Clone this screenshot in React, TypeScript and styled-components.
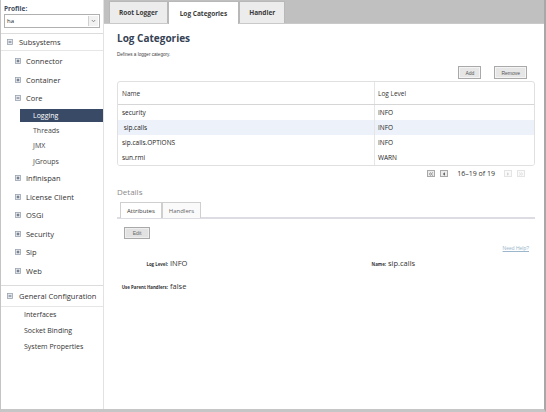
import React from "react";
import { styled, createGlobalStyle } from "styled-components";

const GlobalStyle = createGlobalStyle`
  html, body {
    margin: 0;
    padding: 0;
    background: #fff;
  }
  body {
    font-family: "Open Sans", "Liberation Sans", sans-serif;
    color: #333;
  }
`;

interface TreeNode {
  label: string;
  open?: boolean;
  children?: string[];
}

const subsystems: TreeNode[] = [
  { label: "Connector" },
  { label: "Container" },
  { label: "Core", open: true, children: ["Logging", "Threads", "JMX", "JGroups"] },
  { label: "Infinispan" },
  { label: "License Client" },
  { label: "OSGi" },
  { label: "Security" },
  { label: "Sip" },
  { label: "Web" },
];

const categories = [
  { name: "security", level: "INFO" },
  { name: " sip.calls", level: "INFO" },
  { name: "sip.calls.OPTIONS", level: "INFO" },
  { name: "sun.rmi", level: "WARN" },
];

function ToggleIcon({ open }: { open?: boolean }) {
  return (
    <svg width="6" height="6" viewBox="0 0 6 6">
      <rect x="0.5" y="0.5" width="5" height="5" fill="#e6e9ee" stroke="#9aa3b0" strokeWidth="0.8" />
      <line x1="1.6" y1="3" x2="4.4" y2="3" stroke="#4a5566" strokeWidth="0.9" />
      {!open && <line x1="3" y1="1.6" x2="3" y2="4.4" stroke="#4a5566" strokeWidth="0.9" />}
    </svg>
  );
}

function PagerIcon({ kind, disabled }: { kind: "first" | "prev" | "next" | "last"; disabled?: boolean }) {
  const c = disabled ? "#d0d0d0" : "#555";
  return (
    <PagerBtn $disabled={disabled}>
      <svg width="7" height="7" viewBox="0 0 7 7">
        {kind === "prev" && <path d="M4.5 1.5 L2.2 3.5 L4.5 5.5 Z" fill={c} />}
        {kind === "next" && <path d="M2.5 1.5 L4.8 3.5 L2.5 5.5 Z" fill={c} />}
        {kind === "first" && (
          <path d="M3.4 1.8 L1.6 3.5 L3.4 5.2 M5.6 1.8 L3.8 3.5 L5.6 5.2" stroke={c} fill="none" strokeWidth="0.8" />
        )}
        {kind === "last" && (
          <path d="M1.4 1.8 L3.2 3.5 L1.4 5.2 M3.6 1.8 L5.4 3.5 L3.6 5.2" stroke={c} fill="none" strokeWidth="0.8" />
        )}
      </svg>
    </PagerBtn>
  );
}

export default function App() {
  return (
    <>
      <GlobalStyle />
      <Frame>
        <Sidebar>
          <ProfileBox>
            <ProfileLabel>Profile:</ProfileLabel>
            <Select>
              <span>ha</span>
              <SelectArrow>
                <svg width="5" height="4" viewBox="0 0 5 4">
                  <path d="M0.8 1 L2.5 2.8 L4.2 1" stroke="#777" strokeWidth="0.8" fill="none" />
                </svg>
              </SelectArrow>
            </Select>
          </ProfileBox>

          <SectionHeader>
            <ToggleIcon open />
            <span>Subsystems</span>
          </SectionHeader>
          <TreeList>
            {subsystems.map((node) => (
              <React.Fragment key={node.label}>
                <TreeItem>
                  <ToggleIcon open={node.open} />
                  <span>{node.label}</span>
                </TreeItem>
                {node.children?.map((child) => (
                  <SubItem key={child} className={child === "Logging" ? "selected" : ""}>
                    {child}
                  </SubItem>
                ))}
              </React.Fragment>
            ))}
          </TreeList>

          <SectionHeader className="bordered">
            <ToggleIcon open />
            <span>General Configuration</span>
          </SectionHeader>
          <PlainList>
            <PlainItem>Interfaces</PlainItem>
            <PlainItem>Socket Binding</PlainItem>
            <PlainItem>System Properties</PlainItem>
          </PlainList>
        </Sidebar>

        <Main>
          <TabBar>
            <Tab>Root Logger</Tab>
            <Tab className="active">Log Categories</Tab>
            <Tab>Handler</Tab>
          </TabBar>

          <Content>
            <Title>Log Categories</Title>
            <Description>Defines a logger category.</Description>

            <Toolbar>
              <ToolButton>Add</ToolButton>
              <ToolButton>Remove</ToolButton>
            </Toolbar>

            <Table>
              <HeadRow>
                <NameCell>Name</NameCell>
                <LevelCell>Log Level</LevelCell>
              </HeadRow>
              {categories.map((row, i) => (
                <DataRow key={row.name} $selected={i === 1}>
                  <NameCell>{row.name}</NameCell>
                  <LevelCell>{row.level}</LevelCell>
                </DataRow>
              ))}
            </Table>

            <Pager>
              <PagerIcon kind="first" />
              <PagerIcon kind="prev" />
              <PagerText>16–19 of 19</PagerText>
              <PagerIcon kind="next" disabled />
              <PagerIcon kind="last" disabled />
            </Pager>

            <DetailsTitle>Details</DetailsTitle>
            <SubTabs>
              <SubTab className="active">Attributes</SubTab>
              <SubTab>Handlers</SubTab>
            </SubTabs>

            <EditButton>Edit</EditButton>
            <HelpRow>
              <HelpLink>Need Help?</HelpLink>
            </HelpRow>

            <Form>
              <FieldLabel>Log Level:</FieldLabel>
              <FieldValue>INFO</FieldValue>
              <FieldLabel>Name:</FieldLabel>
              <FieldValue>sip.calls</FieldValue>
              <FieldLabel className="tall">Use Parent Handlers:</FieldLabel>
              <FieldValue className="tall">false</FieldValue>
            </Form>
          </Content>
        </Main>
      </Frame>
    </>
  );
}

const Frame = styled.div`
  box-sizing: border-box;
  width: 546px;
  height: 412px;
  display: flex;
  border-left: 1px solid #c4c4c4;
  border-right: 2px solid #a8a8a8;
  border-bottom: 3px solid #c6c6c6;
  overflow: hidden;
`;

const Sidebar = styled.div`
  width: 102px;
  flex-shrink: 0;
  border-right: 1px solid #e2e2e2;
  display: flex;
  flex-direction: column;
`;

const ProfileBox = styled.div`
  padding: 5px 3px 5px 3px;
  border-bottom: 1px solid #dcdcdc;
`;

const ProfileLabel = styled.div`
  font-size: 6.5px;
  font-weight: 700;
  color: #3e4b5e;
  line-height: 8px;
  margin-bottom: 1px;
`;

const Select = styled.div`
  display: flex;
  align-items: center;
  justify-content: space-between;
  height: 12px;
  border: 1px solid #b0b0b0;
  font-size: 6px;
  color: #222;
  padding-left: 2px;
  background: #fff;
`;

const SelectArrow = styled.div`
  width: 9px;
  height: 10px;
  margin-right: 1px;
  border-left: 1px solid #d0d0d0;
  background: #f2f2f2;
  display: flex;
  align-items: center;
  justify-content: center;
`;

const SectionHeader = styled.div`
  display: flex;
  align-items: center;
  gap: 6px;
  height: 16px;
  padding: 0 0 0 6px;
  font-size: 7.5px;
  color: #333;
  border-bottom: 1px solid #e6e6e6;
  &.bordered {
    margin-top: 5px;
    border-top: 1px solid #dcdcdc;
    height: 20px;
    padding-top: 0;
  }
`;

const TreeList = styled.div`
  display: flex;
  flex-direction: column;
  padding-top: 1px;
`;

const TreeItem = styled.div`
  display: flex;
  align-items: center;
  gap: 5px;
  height: 18.5px;
  padding-left: 14px;
  font-size: 7.5px;
  color: #333;
`;

const SubItem = styled.div`
  height: 15.5px;
  line-height: 15.5px;
  margin-left: 19px;
  padding-left: 13px;
  font-size: 7px;
  color: #444;
  &.selected {
    background: #394a66;
    color: #fff;
    height: 13px;
    line-height: 13px;
    margin: 1px 0 1px 19px;
  }
`;

const PlainList = styled.div`
  display: flex;
  flex-direction: column;
  padding-top: 0;
`;

const PlainItem = styled.div`
  height: 16px;
  line-height: 16px;
  padding-left: 23px;
  font-size: 7px;
  color: #333;
`;

const Main = styled.div`
  flex: 1;
  display: flex;
  flex-direction: column;
  min-width: 0;
`;

const TabBar = styled.div`
  height: 24px;
  background: #c0c0c0;
  display: flex;
  align-items: flex-end;
  padding-left: 5px;
  box-sizing: border-box;
  border-bottom: 1px solid #c9c9c9;
`;

const Tab = styled.div`
  height: 22px;
  box-sizing: border-box;
  padding: 0 9px;
  display: flex;
  align-items: center;
  font-size: 6.5px;
  font-weight: 700;
  color: #3a3a3a;
  background: #ececec;
  border: 1px solid #b8b8b8;
  border-bottom: none;
  &.active {
    background: #fff;
    height: 23px;
    padding: 0 11px;
    margin-bottom: -1px;
  }
`;

const Content = styled.div`
  padding: 0 9px 0 13px;
  display: flex;
  flex-direction: column;
`;

const Title = styled.div`
  margin-top: 8px;
  font-size: 10px;
  font-weight: 700;
  color: #364254;
  line-height: 13px;
`;

const Description = styled.div`
  margin-top: 7px;
  font-family: "Liberation Sans", Arial, sans-serif;
  font-size: 4.6px;
  color: #444;
`;

const Toolbar = styled.div`
  display: flex;
  justify-content: flex-end;
  gap: 13px;
  margin-top: 9px;
  padding-right: 8px;
`;

const ToolButton = styled.div`
  height: 13px;
  box-sizing: border-box;
  padding: 0 6px;
  display: flex;
  align-items: center;
  font-family: "Liberation Sans", Arial, sans-serif;
  font-size: 5px;
  color: #555;
  background: #e6e6e6;
  border: 1px solid #a9a9a9;
  box-shadow: inset 0 0 0 1px #f4f4f4;
`;

const Table = styled.div`
  margin-top: 2px;
  border: 1px solid #e0e0e0;
  border-radius: 3px;
  overflow: hidden;
`;

const HeadRow = styled.div`
  display: flex;
  height: 22px;
  align-items: center;
  border-bottom: 1px solid #d6d6d6;
  font-size: 6.5px;
  color: #333;
`;

const DataRow = styled.div<{ $selected?: boolean }>`
  display: flex;
  height: 15px;
  align-items: center;
  font-size: 6.5px;
  color: #222;
  background: ${(p) => (p.$selected ? "#edf2fa" : "#fff")};
`;

const NameCell = styled.div`
  width: 256px;
  padding-left: 4px;
  box-sizing: border-box;
  white-space: pre;
  height: 100%;
  display: flex;
  align-items: center;
`;

const LevelCell = styled.div`
  flex: 1;
  padding-left: 3px;
  height: 100%;
  display: flex;
  align-items: center;
  border-left: 1px solid #e6e6e6;
`;

const Pager = styled.div`
  display: flex;
  align-items: center;
  justify-content: flex-end;
  gap: 5px;
  margin-top: 3px;
  padding-right: 10px;
  height: 9px;
`;

const PagerBtn = styled.div<{ $disabled?: boolean }>`
  width: 8px;
  height: 7px;
  box-sizing: border-box;
  border: 1px solid ${(p) => (p.$disabled ? "#e4e4e4" : "#a8a8a8")};
  background: ${(p) => (p.$disabled ? "#fafafa" : "#ececec")};
  display: flex;
  align-items: center;
  justify-content: center;
  svg {
    width: 6px;
    height: 6px;
  }
`;

const PagerText = styled.div`
  font-size: 7px;
  color: #333;
  margin: 0 4px;
`;

const DetailsTitle = styled.div`
  margin-top: 9px;
  font-size: 8px;
  color: #8a8a8a;
  line-height: 10px;
`;

const SubTabs = styled.div`
  display: flex;
  margin-top: 5px;
  border-bottom: 2px solid #dcdce2;
  padding-left: 3px;
`;

const SubTab = styled.div`
  height: 16px;
  box-sizing: border-box;
  padding: 0 6px;
  display: flex;
  align-items: center;
  font-size: 6px;
  color: #666;
  border: 1px solid #cfcfcf;
  border-bottom: none;
  background: #fafafa;
  margin-bottom: -1px;
  &.active {
    color: #333;
    background: #fff;
    padding: 0 6px;
  }
`;

const EditButton = styled.div`
  align-self: flex-start;
  margin: 8px 0 0 7px;
  height: 12px;
  width: 26px;
  box-sizing: border-box;
  display: flex;
  align-items: center;
  justify-content: center;
  font-family: "Liberation Sans", Arial, sans-serif;
  font-size: 5px;
  color: #666;
  background: #e2e2e2;
  border: 1px solid #a9a9a9;
  box-shadow: inset 0 0 0 1px #eeeeee;
`;

const HelpRow = styled.div`
  display: flex;
  justify-content: flex-end;
  padding-right: 6px;
  margin-top: 6px;
`;

const HelpLink = styled.a`
  font-family: "Liberation Sans", Arial, sans-serif;
  font-size: 5px;
  color: #9cb7cc;
  text-decoration: underline;
`;

const Form = styled.div`
  display: grid;
  grid-template-columns: 51px 150px 64px 1fr;
  column-gap: 2px;
  row-gap: 0;
  align-items: baseline;
  margin-top: 7px;
`;

const FieldLabel = styled.div`
  text-align: right;
  font-size: 4.4px;
  font-weight: 700;
  color: #333;
  line-height: 10px;
  &.tall {
    margin-top: 12px;
  }
`;

const FieldValue = styled.div`
  font-size: 7.5px;
  color: #333;
  line-height: 10px;
  &.tall {
    margin-top: 12px;
  }
`;
